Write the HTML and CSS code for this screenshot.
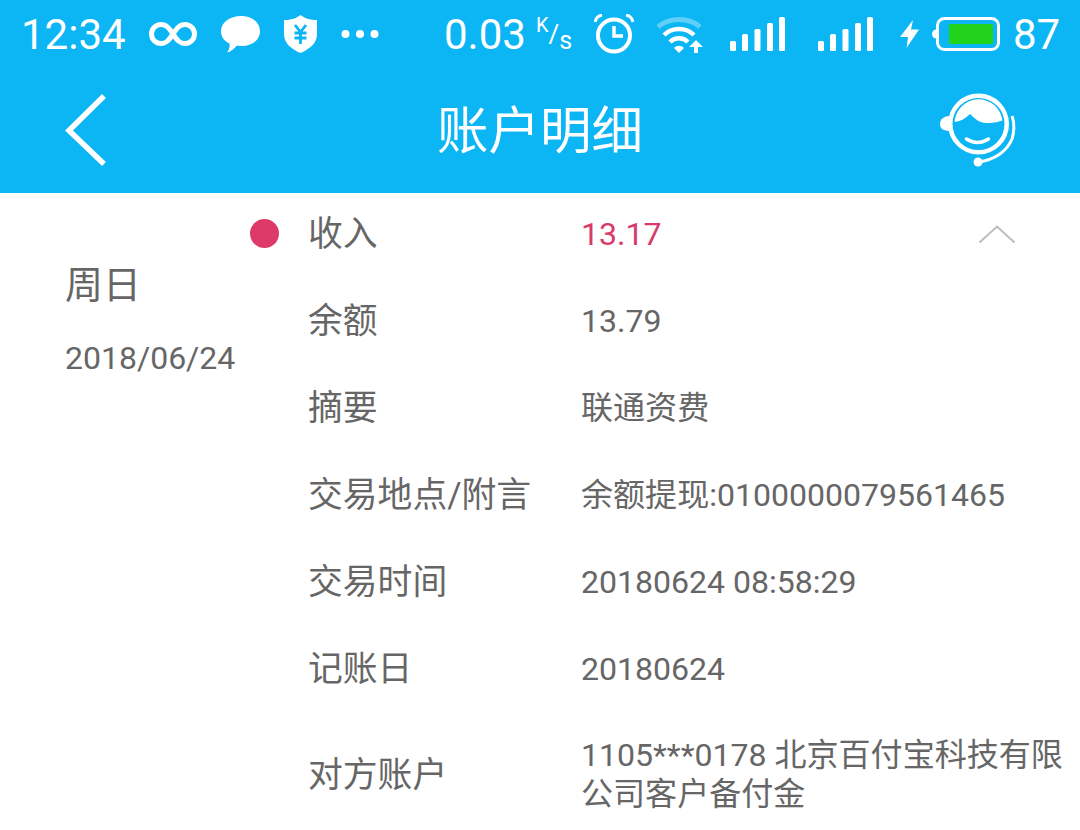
FILE: index.html
```html
<!DOCTYPE html>
<html lang="zh-CN">
<head>
    <meta charset="UTF-8">
    <meta name="viewport" content="width=device-width, initial-scale=1.0">
    <title>账户明细</title>
    <link rel="stylesheet" href="styles.css">
</head>
<body>
    <div class="header">
        <div class="status-bar">
            <span class="status-time">12:34</span>
            <svg class="icon-infinity" width="48" height="24" viewBox="0 0 48 24"><path d="M24 12C20 6 17.500 2.500 12 2.500a9.500 9.500 0 0 0 0 19C17.500 21.500 20 18 24 12C28 6 30.500 2.500 36 2.500a9.500 9.500 0 0 1 0 19C30.500 21.500 28 18 24 12Z" fill="none" stroke="#fff" stroke-width="5"/></svg>
            <svg class="icon-bubble" width="39" height="37" viewBox="0 0 39 37"><path d="M20 0C31 0 39 6.500 39 15C39 24 31 30 21 30C19 30 17.500 30 16 29.500C13 33 9 36 6 36.500C8 34 9 31 8.500 27.500C3 25 0 20.500 0 15C0 6.500 9 0 20 0Z" fill="#fff"/></svg>
            <svg class="icon-shield" width="33" height="38" viewBox="0 0 33 38"><path d="M16.500 0C20 3 26 5 33 5V19C33 28 26 34 16.500 38C7 34 0 28 0 19V5C7 5 13 3 16.500 0Z" fill="#fff"/><path d="M11 10L16.500 17L22 10M10.500 18H22.500M10.500 23H22.500M16.500 17V29" fill="none" stroke="#0cb5f4" stroke-width="2.800"/></svg>
            <svg class="icon-dots" width="38" height="10" viewBox="0 0 38 10"><circle cx="4.500" cy="5" r="4" fill="#fff"/><circle cx="19" cy="5" r="4" fill="#fff"/><circle cx="33.500" cy="5" r="4" fill="#fff"/></svg>
            <span class="status-speed">0.03</span>
            <span class="status-unit"><sup>K</sup>/<sub>s</sub></span>
            <svg class="icon-alarm" width="40" height="40" viewBox="0 0 40 40"><circle cx="20" cy="21.500" r="16" fill="none" stroke="#fff" stroke-width="4"/><path d="M20 12V22H29" fill="none" stroke="#fff" stroke-width="3.500"/><path d="M1 8C2 4 5 1.500 8 1M39 8C38 4 35 1.500 32 1" fill="none" stroke="#fff" stroke-width="3"/></svg>
            <svg class="icon-wifi" width="46" height="38" viewBox="0 0 46 38"><path d="M1 12C12 2 32 2 43 12" fill="none" stroke="#fff" stroke-opacity="0.35" stroke-width="5"/><path d="M7 20C15 12 29 12 37 20M13 27C18 22 26 22 31 27" fill="none" stroke="#fff" stroke-width="4.500"/><path d="M17 33C20 30 24 30 27 33L22 38Z" fill="#fff"/><path d="M39 25L46 32H41V38H37V32H32Z" fill="#fff"/></svg>
            <svg class="icon-signal" width="55" height="34" viewBox="0 0 55 34"><rect x="0" y="24" width="6" height="10" rx="1.500" fill="#fff"/><rect x="12" y="17" width="6" height="17" rx="1.500" fill="#fff"/><rect x="24.500" y="12" width="6" height="22" rx="1.500" fill="#fff"/><rect x="37" y="6" width="6" height="28" rx="1.500" fill="#fff"/><rect x="49" y="0" width="6" height="34" rx="1.500" fill="#fff"/></svg>
            <svg class="icon-signal-two" width="55" height="34" viewBox="0 0 55 34"><rect x="0" y="24" width="6" height="10" rx="1.500" fill="#fff"/><rect x="12" y="17" width="6" height="17" rx="1.500" fill="#fff"/><rect x="24.500" y="12" width="6" height="22" rx="1.500" fill="#fff"/><rect x="37" y="6" width="6" height="28" rx="1.500" fill="#fff"/><rect x="49" y="0" width="6" height="34" rx="1.500" fill="#fff"/></svg>
            <svg class="icon-bolt" width="19" height="28" viewBox="0 0 19 28"><path d="M13 0L0 17H8L6.500 28L19 9.500H11Z" fill="#fff"/></svg>
            <svg class="icon-battery" width="68" height="34" viewBox="0 0 68 34"><circle cx="4.500" cy="17" r="4.500" fill="#fff"/><rect x="5.500" y="1.500" width="61" height="31" rx="7" fill="#0cb5f4" stroke="#fff" stroke-width="3"/><rect x="17" y="7" width="44" height="20" rx="1" fill="#22d31c"/></svg>
            <span class="status-level">87</span>
        </div>
        <div class="nav-bar">
            <svg class="nav-back" width="42" height="72" viewBox="0 0 42 72"><path d="M40 2L5 36.500L40 70" fill="none" stroke="#fff" stroke-width="5.500"/></svg>
            <h1 class="nav-title">账户明细</h1>
            <svg class="nav-service" width="76" height="74" viewBox="0 0 76 74">
                <circle cx="38.500" cy="31" r="28.250" fill="none" stroke="#fff" stroke-width="4.500"/>
                <path d="M14.600 29A24 24 0 0 1 62.400 27.500C57 29.500 52 30 46 30C40 30 35 26 30 21C25 26 20 28.500 14.600 29Z" fill="#fff"/>
                <path d="M26.500 46C33 50.500 42 50.500 48.500 46" fill="none" stroke="#fff" stroke-width="3.500" stroke-linecap="round"/>
                <path d="M10 23C4 23 0 26 0 31C0 36 4 38 10 38Z" fill="#fff"/>
                <path d="M72 23C75 30 74 40 72 46C67 58 55 67 38 69" fill="none" stroke="#fff" stroke-width="3"/>
                <circle cx="38" cy="69" r="4.500" fill="#fff"/>
            </svg>
        </div>
    </div>

    <div class="detail">
        <div class="date-col">
            <div class="weekday">周日</div>
            <div class="date">2018/06/24</div>
        </div>
        <div class="rows">
            <div class="row">
                <span class="dot"></span>
                <span class="label">收入</span>
                <span class="value value-income">13.17</span>
                <svg class="collapse" width="38" height="19" viewBox="0 0 38 19"><path d="M1.500 17.500L19 1.500L36.500 17.500" fill="none" stroke="#bdbdbd" stroke-width="2"/></svg>
            </div>
            <div class="row">
                <span class="label">余额</span>
                <span class="value">13.79</span>
            </div>
            <div class="row">
                <span class="label">摘要</span>
                <span class="value">联通资费</span>
            </div>
            <div class="row">
                <span class="label">交易地点/附言</span>
                <span class="value">余额提现:0100000079561465</span>
            </div>
            <div class="row">
                <span class="label">交易时间</span>
                <span class="value">20180624 08:58:29</span>
            </div>
            <div class="row">
                <span class="label">记账日</span>
                <span class="value">20180624</span>
            </div>
            <div class="row row-long">
                <span class="label">对方账户</span>
                <span class="value">1105***0178 北京百付宝科技有限公司客户备付金</span>
            </div>
        </div>
    </div>
</body>
</html>
```

FILE: styles.css
```css
html, body {
    height: 830px;
    overflow: hidden;
}

body {
    margin: 0;
    background-color: white;
    color: #666;
    font-family: Roboto, "Noto Sans CJK SC", sans-serif;
}

.header {
    height: 193px;
    background-color: #0cb5f4;
    color: white;
}

.status-bar {
    display: flex;
    align-items: center;
    height: 68px;
    padding-left: 21px;
    font-size: 42px;
    white-space: nowrap;
}

.status-bar svg {
    flex: none;
}

.status-time {
    width: 106px;
}

.icon-infinity {
    margin-left: 22px;
}

.icon-bubble,
.icon-shield,
.icon-dots {
    margin-left: 24px;
}

.status-speed {
    margin-left: 65px;
    width: 81px;
}

.status-unit {
    width: 36px;
    margin-left: 11px;
    font-size: 26px;
    line-height: 1;
}

.status-unit sup {
    font-size: 20px;
    vertical-align: 11px;
    line-height: 0;
}

.status-unit sub {
    font-size: 25px;
    vertical-align: -6px;
    line-height: 0;
}

.icon-alarm {
    margin-left: 22px;
}

.icon-wifi {
    margin-left: 23px;
}

.icon-signal {
    margin-left: 27px;
}

.icon-signal-two {
    margin-left: 33px;
}

.icon-bolt {
    margin-left: 27px;
}

.icon-battery {
    margin-left: 13px;
}

.status-level {
    margin-left: 13px;
}

.nav-bar {
    display: grid;
    grid-template-columns: 1fr auto 1fr;
    align-items: center;
    height: 123px;
    padding: 0 64px 2px 64px;
}

.nav-title {
    margin: 0 0 6px;
    font-size: 51.500px;
    font-weight: 400;
}

.nav-service {
    justify-self: end;
}

.detail {
    display: flex;
}

.date-col {
    width: 185px;
    padding-left: 65px;
    padding-top: 62px;
}

.weekday {
    font-size: 38px;
    line-height: 60px;
}

.date {
    margin-top: 23px;
    font-size: 32px;
    line-height: 40px;
}

.rows {
    flex: 1;
    display: flex;
    flex-direction: column;
    gap: 39px;
    padding-top: 17px;
}

.row {
    position: relative;
    display: flex;
    align-items: center;
    min-height: 48px;
    padding-left: 58px;
}

.row-long {
    margin-top: 3px;
}

.dot {
    position: absolute;
    left: 0;
    top: 9px;
    width: 29px;
    height: 29px;
    border-radius: 50%;
    background-color: #dd3a68;
}

.label {
    flex: none;
    width: 273px;
    font-size: 34.800px;
    line-height: 48px;
}

.value {
    flex: 1;
    padding-top: 1px;
    padding-right: 15px;
    font-size: 32.050px;
    line-height: 39px;
}

.value-income {
    color: #d83a6b;
}

.collapse {
    position: absolute;
    right: 64px;
    top: 15px;
}
```
